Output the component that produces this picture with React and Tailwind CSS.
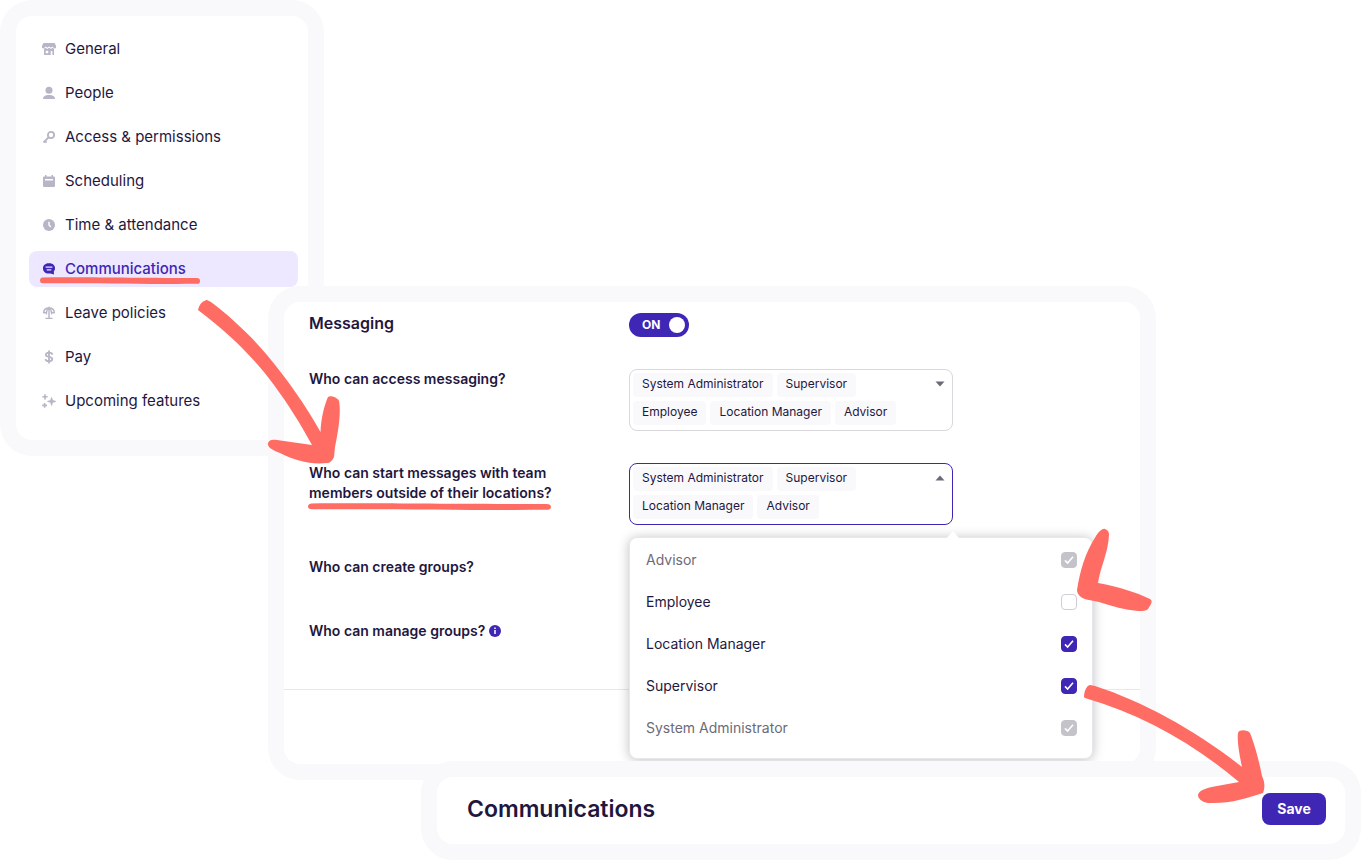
import { useState } from 'react';
import clsx from 'clsx';

const NAV_ITEMS = [
  { id: 'general', label: 'General', Icon: StoreIcon },
  { id: 'people', label: 'People', Icon: PersonIcon },
  { id: 'access', label: 'Access & permissions', Icon: KeyIcon },
  { id: 'scheduling', label: 'Scheduling', Icon: CalendarIcon },
  { id: 'time', label: 'Time & attendance', Icon: ClockIcon },
  { id: 'communications', label: 'Communications', Icon: ChatIcon },
  { id: 'leave', label: 'Leave policies', Icon: UmbrellaIcon },
  { id: 'pay', label: 'Pay', Icon: DollarIcon },
  { id: 'upcoming', label: 'Upcoming features', Icon: SparklesIcon },
];

const ROLES = [
  { name: 'Advisor', locked: true },
  { name: 'Employee', locked: false },
  { name: 'Location Manager', locked: false },
  { name: 'Supervisor', locked: false },
  { name: 'System Administrator', locked: true },
];

const CHIP_ORDER = ['System Administrator', 'Supervisor', 'Employee', 'Location Manager', 'Advisor'];

/* Icons */

function Icon({ children }) {
  return (
    <svg viewBox="0 0 14 14" className="size-3.5 shrink-0" fill="currentColor" aria-hidden="true">
      {children}
    </svg>
  );
}

function StoreIcon() {
  return (
    <Icon>
      <path d="M1.500 1h11L14 3.800V5a1.300 1.300 0 0 1-2.600.4L10.300 4.400 9 5.800 7.100 4.400 5.200 5.800 3.800 4.400 2.600 5.400A1.300 1.300 0 0 1 0 5V3.800z" />
      <path
        fillRule="evenodd"
        d="M2 6.800 3.800 5.800 5.200 7 7.100 5.800 9 7 10.300 5.800 12 6.800V13h-1.600V9H8.700v4H2zM3.700 8.800v2.400h2.600V8.800z"
      />
    </Icon>
  );
}

function PersonIcon() {
  return (
    <Icon>
      <circle cx="7" cy="4.300" r="3.500" />
      <path d="M1 13c0-2.600 2.500-4 6-4s6 1.400 6 4z" />
    </Icon>
  );
}

function KeyIcon() {
  return (
    <Icon>
      <g fill="none" stroke="currentColor" strokeWidth="1.800">
        <circle cx="9" cy="5" r="3.100" />
        <path d="M6.800 7.200 1.500 12.500M2.600 10.600l2 2" />
      </g>
    </Icon>
  );
}

function CalendarIcon() {
  return (
    <Icon>
      <path
        fillRule="evenodd"
        d="M3 1h1.500v1.400h5V1H11v1.400h.8A1.200 1.200 0 0 1 13 3.600v8.200a1.200 1.200 0 0 1-1.200 1.200H2.200A1.200 1.200 0 0 1 1 11.800V3.600a1.200 1.200 0 0 1 1.200-1.200H3zM3 5v1.600h8V5z"
      />
    </Icon>
  );
}

function ClockIcon() {
  return (
    <Icon>
      <circle cx="7" cy="7" r="6" />
      <path d="M7 3.800V7l1.800 1.900" fill="none" stroke="white" strokeWidth="1.400" />
    </Icon>
  );
}

function ChatIcon() {
  return (
    <Icon>
      <path d="M6.500 1.300h1c3.300 0 5.500 2.200 5.500 5 0 1.300-.5 2.400-1.200 3.200l.2 3.100-3.500-1.100h-2C3.200 11.500 1 9.200 1 6.400s2.200-5.100 5.500-5.100z" />
      <path d="M3.600 5.200h6.800M4.700 7.900h4.600" fill="none" stroke="#ede8ff" strokeWidth="1.300" />
    </Icon>
  );
}

function UmbrellaIcon() {
  return (
    <Icon>
      <g fill="none" stroke="currentColor" strokeWidth="1.400">
        <path d="M1.600 7.200C1.600 3.900 3.900 2 7 2s5.400 1.900 5.400 5.200" />
        <path d="M1.600 7q1.500-1.200 2.800.3Q4.500 3.500 7 2q2.500 1.500 2.600 5.300Q10.900 5.800 12.400 7M7 .8V12.200M3.500 12.400h7" />
      </g>
    </Icon>
  );
}

function DollarIcon() {
  return (
    <Icon>
      <path
        d="M10.400 4.600C10.200 3.200 8.900 2.700 7 2.700S3.800 3.400 3.800 4.800c0 3 6.500 1.300 6.500 4.300 0 1.500-1.400 2.200-3.300 2.200s-3.300-.7-3.500-2.100M7 .6v12.800"
        fill="none"
        stroke="currentColor"
        strokeWidth="1.800"
      />
    </Icon>
  );
}

function SparklesIcon() {
  return (
    <Icon>
      <path d="M9.600 3.200 10.700 6.300 14 7.400l-3.300 1.100-1.100 3.200-1.100-3.200-3.200-1.100 3.200-1.100z" stroke="currentColor" strokeWidth=".5" />
      <path d="M3 .2v5.200M.4 2.800h5.200M2.600 9v4.800M.2 11.400H5" fill="none" stroke="currentColor" strokeWidth="1.600" />
    </Icon>
  );
}

function InfoIcon() {
  return (
    <svg viewBox="0 0 12 12" className="size-3 text-[#3f26b5]" aria-hidden="true">
      <circle cx="6" cy="6" r="6" fill="currentColor" />
      <path d="M6 5v4M6 2.400v1.500" stroke="white" strokeWidth="1.500" />
    </svg>
  );
}

function Caret({ open }) {
  return (
    <svg viewBox="0 0 10 6" className="mt-2 h-1.5 w-2.5 shrink-0 text-[#6d6a78]" aria-hidden="true">
      <path d={open ? 'M5 .5 9.500 5.500h-9z' : 'M5 5.500.5.500h9z'} fill="currentColor" />
    </svg>
  );
}

/* Hand-drawn annotations */

function Underline({ className }) {
  return (
    <svg
      viewBox="0 0 160 7"
      preserveAspectRatio="none"
      className={clsx('pointer-events-none absolute text-[#ff6c63]', className)}
      aria-hidden="true"
    >
      <path
        d="M2 .4C40-.2 80 .8 157 1c2 .2 3 1 3 3 0 2-1 2.800-3 2.800C110 7.400 60 5.600 2.500 6.300.8 5.900 0 5 0 3.400S.8.800 2 .4z"
        fill="currentColor"
      />
    </svg>
  );
}

function Arrow({ viewBox, d, className }) {
  return (
    <svg
      viewBox={viewBox}
      className={clsx('pointer-events-none absolute z-20 text-[#ff6c63]', className)}
      aria-hidden="true"
    >
      <path d={d} fill="currentColor" />
    </svg>
  );
}

/* Building blocks */

function Panel({ className, bodyClassName, children }) {
  return (
    <div className={clsx('relative rounded-[32px] bg-[#f9f9fc] p-4', className)}>
      <div className={clsx('rounded-2xl bg-white', bodyClassName)}>{children}</div>
    </div>
  );
}

function SettingRow({ label, children }) {
  return (
    <div className="flex min-h-8 items-start">
      <div className="w-80 shrink-0 pr-16 text-sm leading-5 font-semibold">{label}</div>
      {children}
    </div>
  );
}

function RoleSelect({ label, selected, open, onClick }) {
  return (
    <button
      type="button"
      aria-label={label}
      aria-haspopup="true"
      aria-expanded={open}
      onClick={onClick}
      className={clsx(
        'flex w-81 items-start justify-between rounded-lg border bg-white pt-[3px] pr-[7px] pb-[5px] pl-[3px] text-left',
        open ? 'border-[#3f26b5]' : 'border-[#d9d8dd]'
      )}
    >
      <span className="flex flex-wrap gap-1 pr-8">
        {CHIP_ORDER.filter((name) => selected.includes(name)).map((name) => (
          <span key={name} className="h-6 rounded bg-[#f9f9fc] px-[9px] text-xs leading-[22px]">
            {name}
          </span>
        ))}
      </span>
      <Caret open={open} />
    </button>
  );
}

function RoleMenu({ selected, onToggle }) {
  return (
    <div className="absolute top-[74px] left-0 z-10 w-116 rounded-lg border border-[#e8e7ee] bg-white pt-px pb-[9px] shadow-[0_1px_12px_rgba(0,0,0,0.25)]">
      <svg viewBox="0 0 14 8" className="absolute -top-[7px] left-[316px] h-2 w-3.5" aria-hidden="true">
        <path d="M0 8 7 0l7 8z" fill="white" />
      </svg>
      {ROLES.map((role) => (
        <label
          key={role.name}
          className={clsx(
            'flex h-[42px] items-center justify-between pr-[15px] pl-4 text-sm',
            role.locked && 'text-[#6d6a78]'
          )}
        >
          {role.name}
          <span className="relative flex size-4">
            <input
              type="checkbox"
              checked={selected.includes(role.name)}
              disabled={role.locked}
              onChange={() => onToggle(role.name)}
              className="peer size-4 appearance-none rounded-[4px] border border-[#d0ced6] bg-white checked:border-[#3f26b5] checked:bg-[#3f26b5] disabled:border-[#c5c3ca] disabled:bg-[#c5c3ca]"
            />
            <svg
              viewBox="0 0 16 16"
              className="pointer-events-none absolute inset-0 hidden peer-checked:block"
              aria-hidden="true"
            >
              <path d="M4 8.400 6.600 11 12 4.800" fill="none" stroke="white" strokeWidth="1.600" />
            </svg>
          </span>
        </label>
      ))}
      <Arrow
        viewBox="0 0 80 88"
        className="-top-3 -right-[63px] h-22 w-20"
        d="M21 10C24 5 28 2 30 3C33 4 34 6 34 9C33 28 25 42 23 57C45 61 60 66 75 73C77 74 77 76 76 78L73 83C71 85 68 85 63 85C50 84 37 80 24 76L14 74C7 73 2 69 2 64C5 45 10 27 21 10Z"
      />
    </div>
  );
}

function SettingsNav({ active, onSelect }) {
  return (
    <nav className="flex flex-col gap-2 pt-[15px] pr-2.5 pb-[21px] pl-[13px] text-[15px]">
      {NAV_ITEMS.map(({ id, label, Icon: ItemIcon }) => {
        const isActive = id === active;
        return (
          <a
            key={id}
            href={`#${id}`}
            onClick={() => onSelect(id)}
            className={clsx(
              'relative flex h-9 items-center gap-[9px] rounded-lg px-[13px]',
              isActive && 'bg-[#ede8ff] font-medium text-[#3f26b5]'
            )}
          >
            <span className={isActive ? 'text-[#3f26b5]' : 'text-[#b7b5c6]'}>
              <ItemIcon />
            </span>
            {label}
            {isActive && <Underline className="top-[26px] left-[11px] h-[7px] w-40" />}
          </a>
        );
      })}
    </nav>
  );
}

export default function App() {
  const [activeNav, setActiveNav] = useState('communications');
  const [messagingOn, setMessagingOn] = useState(true);
  const [menuOpen, setMenuOpen] = useState(true);
  const [outsideRoles, setOutsideRoles] = useState(
    ROLES.map((role) => role.name).filter((name) => name !== 'Employee')
  );

  const toggleRole = (name) => {
    setOutsideRoles((current) =>
      current.includes(name) ? current.filter((item) => item !== name) : [...current, name]
    );
  };

  return (
    <div className="overflow-x-hidden bg-white font-['Inter','Liberation_Sans',sans-serif] text-base text-[#1f1740]">
      {/* Settings menu */}
      <Panel className="w-81">
        <SettingsNav active={activeNav} onSelect={setActiveNav} />
      </Panel>

      {/* Messaging settings */}
      <Panel className="-mt-[170px] mr-[205px] ml-67">
        <div className="flex flex-col gap-8 px-[25px] pt-[11px] pb-9">
          <div className="flex h-6 items-start">
            <h2 className="w-80 shrink-0 leading-5 font-semibold">Messaging</h2>
            <button
              type="button"
              role="switch"
              aria-checked={messagingOn}
              aria-label="Messaging"
              onClick={() => setMessagingOn(!messagingOn)}
              className="flex h-6 w-15 items-center justify-between rounded-full bg-[#3f26b5] pr-1 pl-[13px] text-xs font-bold text-white"
            >
              {messagingOn ? 'ON' : 'OFF'}
              <span className="size-4 rounded-full bg-white" />
            </button>
          </div>

          <SettingRow label="Who can access messaging?">
            <RoleSelect label="Who can access messaging?" selected={CHIP_ORDER} open={false} />
          </SettingRow>

          <SettingRow
            label={
              <span className="relative block">
                Who can start messages with team members outside of their locations?
                <Underline className="top-10 -left-px h-[7px] w-[243px]" />
              </span>
            }
          >
            <div className="relative">
              <RoleSelect
                label="Who can start messages with team members outside of their locations?"
                selected={outsideRoles}
                open={menuOpen}
                onClick={() => setMenuOpen(!menuOpen)}
              />
              {menuOpen && <RoleMenu selected={outsideRoles} onToggle={toggleRole} />}
            </div>
          </SettingRow>

          <SettingRow label="Who can create groups?" />
          <SettingRow
            label={
              <span className="flex items-center gap-1">
                Who can manage groups?
                <InfoIcon />
              </span>
            }
          />
        </div>
        <div className="h-[75px] border-t border-[#e8e7eb]" />
        <Arrow
          viewBox="0 0 146 168"
          className="top-3 -left-18 h-42 w-[146px]"
          d="M2 12C3 7 6 3 11 2L15 4C35 19 55 38 71 57C92 82 110 108 124.500 134C125 121 128 108 132 99C135 97 142 100 143 103C145 113 143 130 139 149L138 159C136 163 134 165 131 165C115 167 98 162 84 155C76 152 71 149 72 145C73 142 76 141 81 142L116 147C104 125 92 106 78 87C58 60 34 36 2 12Z"
        />
      </Panel>

      {/* Page header with the save action */}
      <Panel
        className="z-20 -mt-[19px] ml-[421px]"
        bodyClassName="flex items-center justify-between pt-4 pr-[19px] pb-[19px] pl-[30px]"
      >
        <h1 className="text-[23px] leading-8 font-semibold">Communications</h1>
        <button
          type="button"
          className="h-8 w-16 rounded-lg bg-[#3f26b5] text-sm font-bold text-white"
        >
          Save
        </button>
        <Arrow
          viewBox="0 0 184 124"
          className="-top-[78px] right-[95px] h-31 w-46"
          d="M2 14C2 9 4 3 8 2L13 3C60 18 115 48 160 84C157 70 155 58 156 50C157 46 166 47 168 50C173 62 178 82 180 93C183 99 183 105 181 110C165 115 148 121 126 120C119 119 116 115 116 112C117 107 124 105 135 103L157 99C113 62 62 32 3 15Z"
        />
      </Panel>
    </div>
  );
}
